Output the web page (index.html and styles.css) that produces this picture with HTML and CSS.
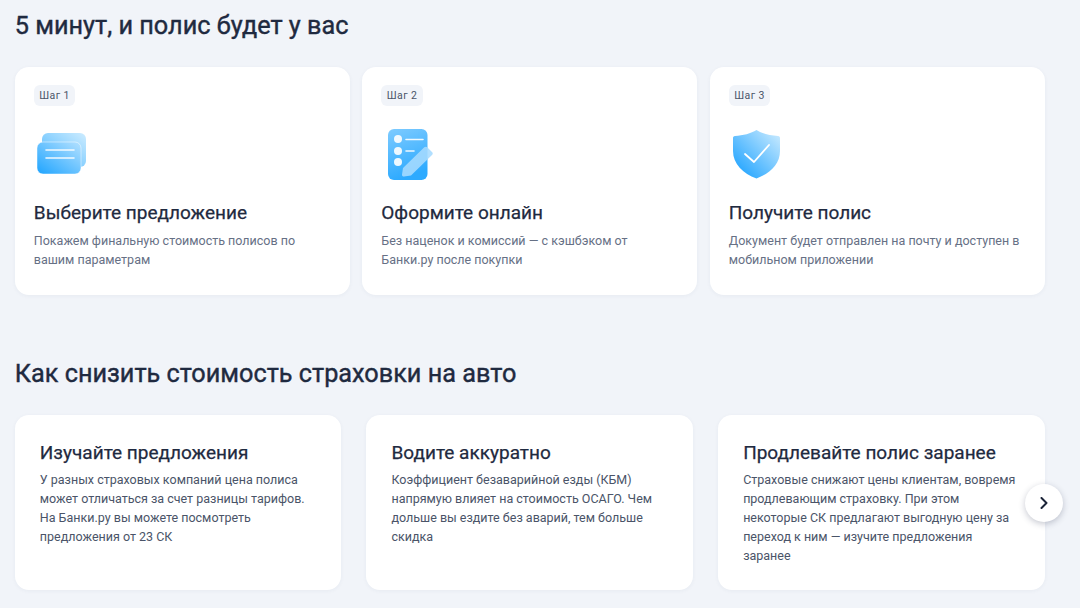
FILE: index.html
```html
<!DOCTYPE html>
<html lang="ru">
<head>
<meta charset="utf-8">
<title>Полис</title>
<link rel="stylesheet" href="styles.css">
</head>
<body>
<main class="page">
  <h2 class="heading">5 минут, и полис будет у вас</h2>
  <section class="steps">
    <article class="step">
      <span class="badge">Шаг 1</span>
      <svg class="icon" viewBox="0 0 56 56">
        <defs>
          <linearGradient id="g1" x1="0" y1="1" x2="1" y2="0"><stop offset="0" stop-color="#1ea4ff"/><stop offset="1" stop-color="#b4e1ff"/></linearGradient>
          <linearGradient id="g0" x1="0" y1="1" x2="1" y2="0"><stop offset="0" stop-color="#4db8ff"/><stop offset="1" stop-color="#cdecff"/></linearGradient>
        </defs>
        <rect x="8" y="7" width="44" height="34" rx="6" fill="url(#g0)"/>
        <rect x="3" y="16" width="44" height="32" rx="6" fill="url(#g1)" stroke="#fff" stroke-opacity=".6" stroke-width=".8"/>
        <path d="M12 24H40M12 32H40" stroke="#fff" stroke-width="1.600" stroke-linecap="round" fill="none" opacity=".9"/>
      </svg>
      <h3 class="step-title">Выберите предложение</h3>
      <p class="step-text">Покажем финальную стоимость полисов по вашим параметрам</p>
    </article>
    <article class="step">
      <span class="badge">Шаг 2</span>
      <svg class="icon" viewBox="0 0 56 56">
        <defs>
          <linearGradient id="g2" x1="0" y1="0" x2="0.300" y2="1"><stop offset="0" stop-color="#7ecbff"/><stop offset="1" stop-color="#2daaff"/></linearGradient>
        </defs>
        <rect x="7" y="3" width="39.500" height="51" rx="6" fill="url(#g2)"/>
        <circle cx="17" cy="13" r="4" fill="#fff" fill-opacity=".9"/>
        <circle cx="17" cy="25" r="4" fill="#fff" fill-opacity=".9"/>
        <circle cx="17" cy="36" r="4" fill="#fff" fill-opacity=".9"/>
        <path d="M25 13.500H42M25 25H33" stroke="#fff" stroke-width="1.600" stroke-linecap="round" fill="none" opacity=".9"/>
        <path d="M22 42L43 21.500C44 20.500 45.500 20.500 46.500 21.500L51 26C52 27 52 28 51 29L30 49.500L23 50.500C21.500 50.500 21 50 21 48.500Z" fill="#a6dbff" fill-opacity=".88"/>
      </svg>
      <h3 class="step-title">Оформите онлайн</h3>
      <p class="step-text">Без наценок и комиссий — с кэшбэком от Банки.ру после покупки</p>
    </article>
    <article class="step">
      <span class="badge">Шаг 3</span>
      <svg class="icon" viewBox="0 0 56 56">
        <defs>
          <linearGradient id="g3" x1="0.100" y1="0.800" x2="0.900" y2="0"><stop offset="0" stop-color="#2ba8ff"/><stop offset="1" stop-color="#c6e9ff"/></linearGradient>
        </defs>
        <path d="M27.500 4C33 7.500 41 9.500 49 10C50.500 10.200 51 11 51 12V25C51 38 41 47.500 27.500 52.500C14 47.500 4 38 4 25V12C4 11 4.500 10.200 6 10C14 9.500 22 7.500 27.500 4Z" fill="url(#g3)"/>
        <path d="M16 28L25 36L40 19" stroke="#fff" stroke-width="1.800" stroke-linecap="round" stroke-linejoin="round" fill="none"/>
      </svg>
      <h3 class="step-title">Получите полис</h3>
      <p class="step-text">Документ будет отправлен на почту и доступен в мобильном приложении</p>
    </article>
  </section>

  <h2 class="heading heading-second">Как снизить стоимость страховки на авто</h2>
  <section class="tips">
    <article class="tip">
      <h3 class="tip-title">Изучайте предложения</h3>
      <p class="tip-text">У разных страховых компаний цена полиса может отличаться за счет разницы тарифов. На Банки.ру вы можете посмотреть предложения от 23 СК</p>
    </article>
    <article class="tip">
      <h3 class="tip-title">Водите аккуратно</h3>
      <p class="tip-text">Коэффициент безаварийной езды (КБМ) напрямую влияет на стоимость ОСАГО. Чем дольше вы ездите без аварий, тем больше скидка</p>
    </article>
    <article class="tip">
      <h3 class="tip-title">Продлевайте полис заранее</h3>
      <p class="tip-text">Страховые снижают цены клиентам, вовремя продлевающим страховку. При этом некоторые СК предлагают выгодную цену за переход к ним — изучите предложения заранее</p>
    </article>
    <button class="next" aria-label="Далее">
      <svg viewBox="0 0 12 12" class="next-icon"><path d="M3.500 1L8.500 6L3.500 11" fill="none" stroke="#1b2438" stroke-width="2" stroke-linecap="round" stroke-linejoin="round"/></svg>
    </button>
  </section>
</main>
</body>
</html>
```
FILE: styles.css
```css
* { box-sizing: border-box; }
html, body { margin: 0; height: 608px; overflow: hidden; }
body { background: #f1f4f9; font-family: Roboto, "Liberation Sans", sans-serif; color: #1f2a40; }
.page { padding: 9px 35.2px 0 14.8px; }
.heading { margin: 0; font-size: 25.25px; line-height: 34px; font-weight: 400; color: #1f2a40; -webkit-text-stroke: .4px #1f2a40; }
.heading-second { margin-top: 62px; }
.steps { display: grid; grid-template-columns: repeat(3, 1fr); gap: 12.5px; margin-top: 24px; }
.step { background: #fff; border-radius: 14px; height: 228px; padding: 18px 19px 0; box-shadow: 0 1px 4px rgba(40, 60, 100, .05); }
.badge { display: block; width: fit-content; background: #f1f4f9; color: #4a5468; border-radius: 6px; font-size: 10.5px; line-height: 21px; padding: 0 5.5px; letter-spacing: .4px; }
.icon { display: block; width: 56px; height: 56px; margin: 20px 0 0 0; }
.step-title { margin: 19px 0 0; font-size: 19px; line-height: 24px; font-weight: 400; color: #1f2a40; -webkit-text-stroke: .25px #1f2a40; }
.step-text { margin: 6px 0 0; font-size: 12.5px; line-height: 19px; color: #667085; }
.tips { position: relative; display: grid; grid-template-columns: repeat(3, 1fr); gap: 25px; margin-top: 24px; }
.tip { background: #fff; border-radius: 14px; height: 175px; padding: 26px 25px 0; box-shadow: 0 1px 4px rgba(40, 60, 100, .05); }
.tip-title { margin: 0; font-size: 19px; line-height: 24px; font-weight: 400; color: #1f2a40; -webkit-text-stroke: .25px #1f2a40; }
.tip-text { margin: 5px 0 0; font-size: 12.5px; line-height: 19px; color: #4a5468; }
.next { position: absolute; right: -18px; top: 69px; width: 38px; height: 38px; border: 0; padding: 0; border-radius: 50%; background: #fff; box-shadow: 0 2px 6px rgba(30, 40, 70, .25); display: flex; align-items: center; justify-content: center; }
.next-icon { width: 12px; height: 12px; }
```
